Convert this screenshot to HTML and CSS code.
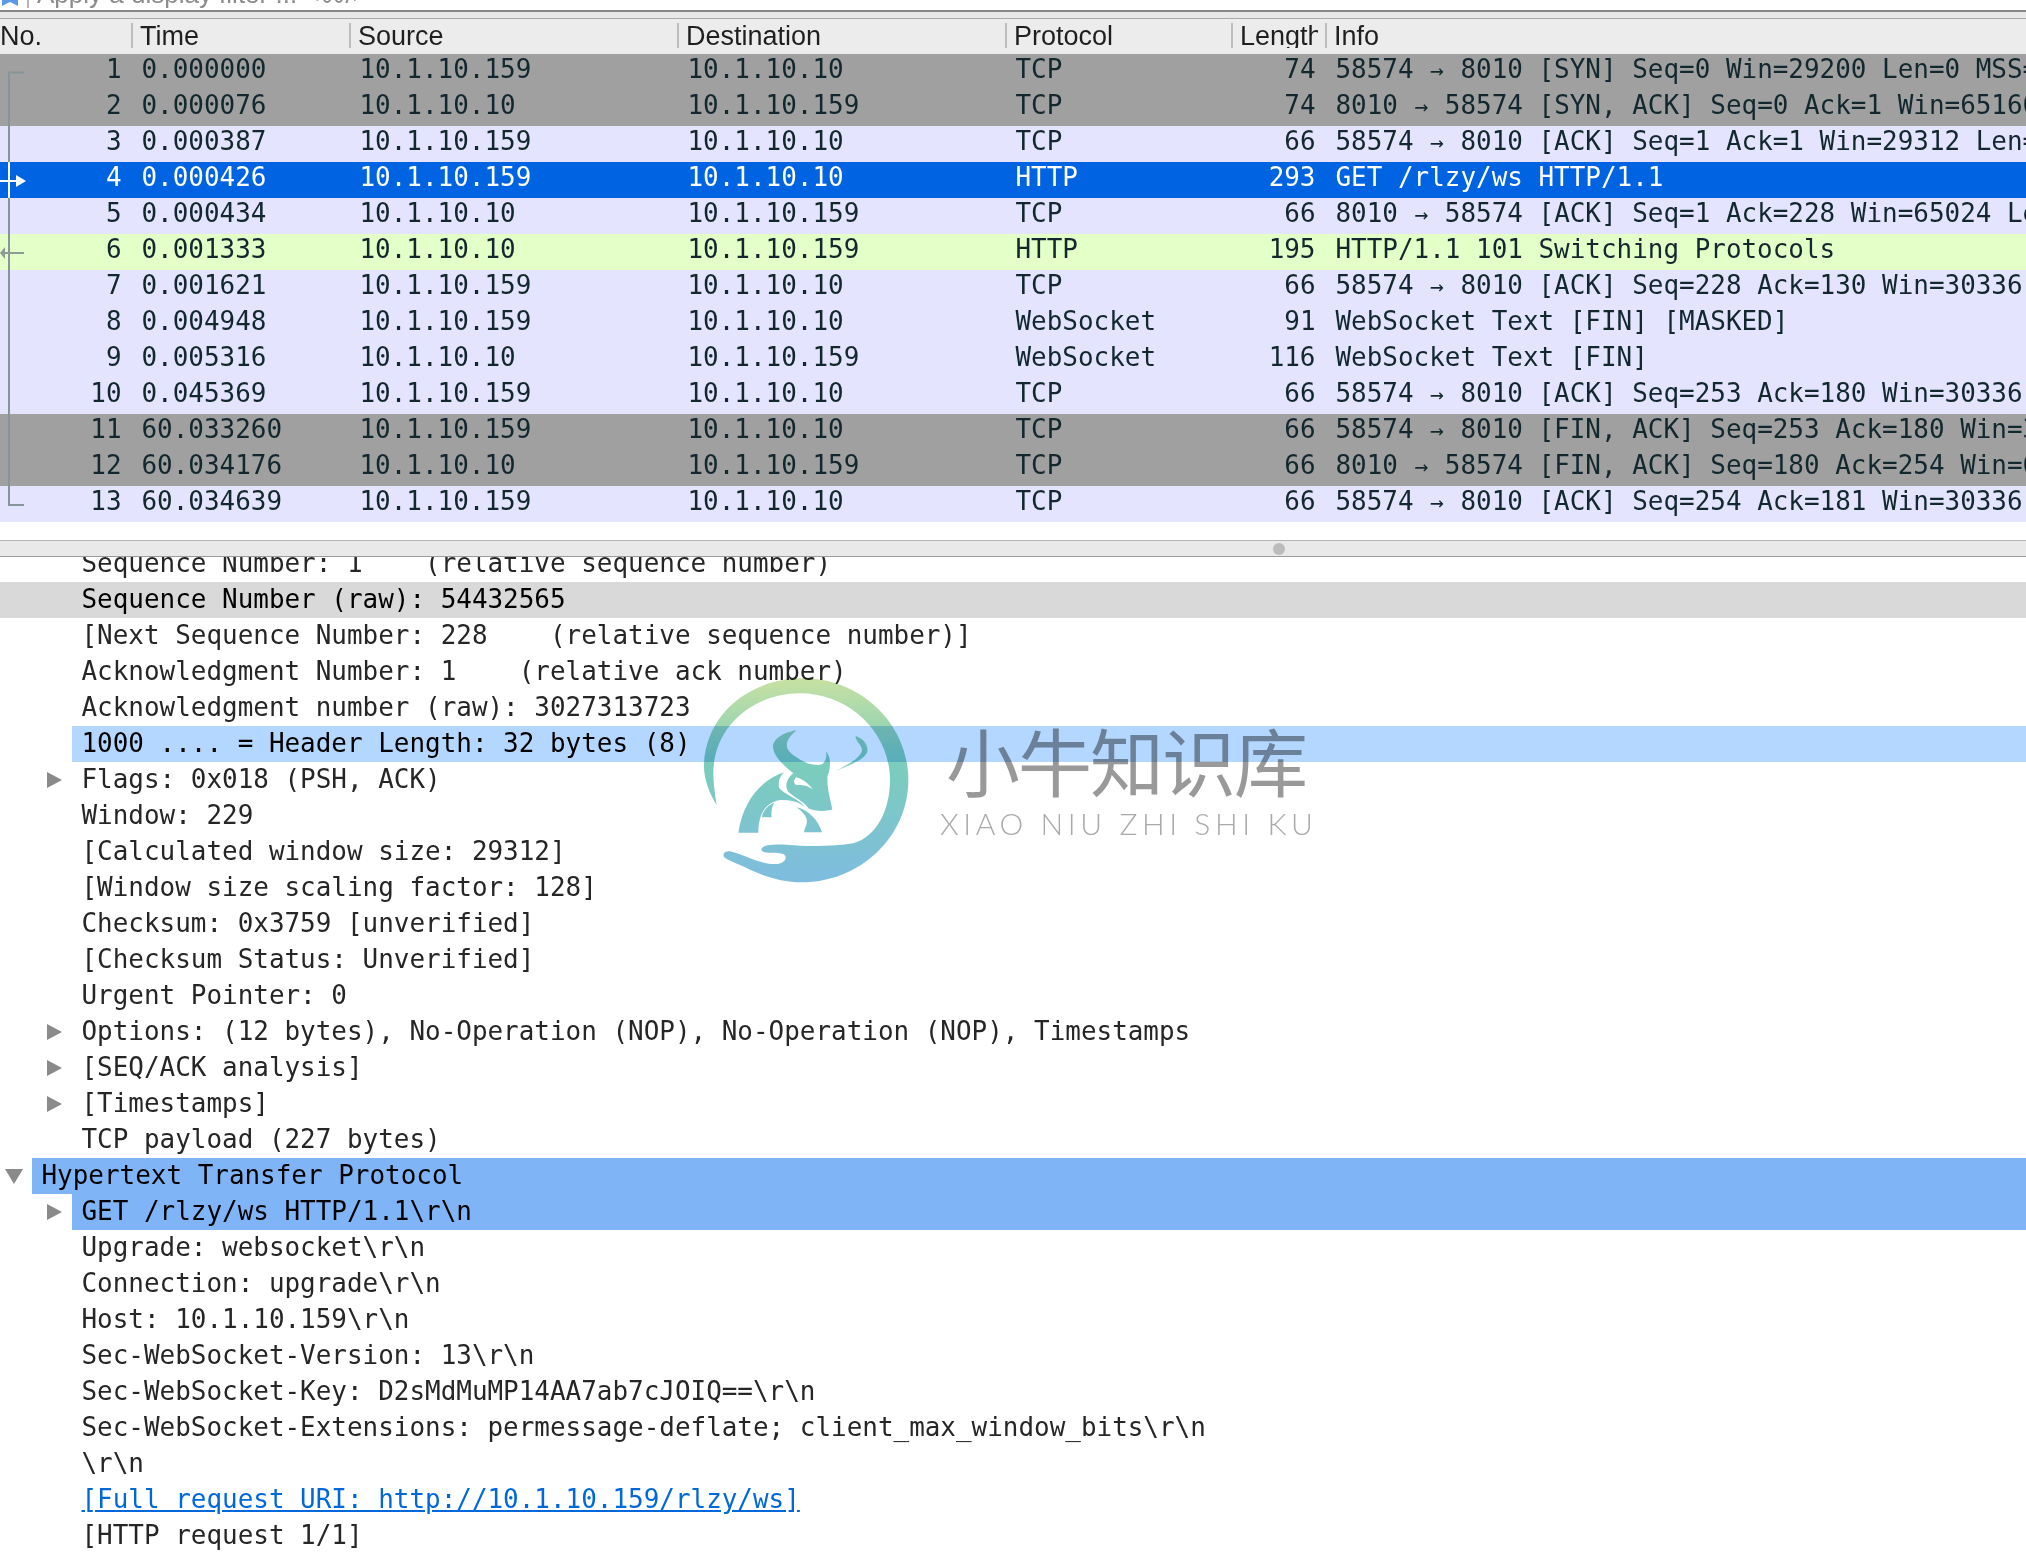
FILE: index.html
```html
<!DOCTYPE html>
<html lang="en">
<head>
<meta charset="utf-8">
<title>Wireshark capture</title>
<link rel="stylesheet" href="styles.css">
</head>
<body>
<div class="app">
  <div class="filter-bar">
    <svg class="bookmark" width="20" height="6" viewBox="0 0 20 6"><polygon points="2,0 18,0 18,6 10,2 2,6" fill="#5b9be6"/></svg>
    <span class="filter-sep"></span>
    <span class="filter-text">Apply a display filter ... &lt;⌘/&gt;</span>
  </div>
  <div class="strip"></div>
  <div class="packet-head cols">
    <div class="hcell first"><span>No.</span></div>
    <div class="hcell"><span>Time</span></div>
    <div class="hcell"><span>Source</span></div>
    <div class="hcell"><span>Destination</span></div>
    <div class="hcell"><span>Protocol</span></div>
    <div class="hcell len"><span>Length</span></div>
    <div class="hcell"><span>Info</span></div>
  </div>
  <div class="packets">
    <div class="pkt cols gray"><span class="no">1</span><span>0.000000</span><span>10.1.10.159</span><span>10.1.10.10</span><span>TCP</span><span class="num">74</span><span>58574 <i>→</i> 8010 [SYN] Seq=0 Win=29200 Len=0 MSS=1460</span></div>
    <div class="pkt cols gray"><span class="no">2</span><span>0.000076</span><span>10.1.10.10</span><span>10.1.10.159</span><span>TCP</span><span class="num">74</span><span>8010 <i>→</i> 58574 [SYN, ACK] Seq=0 Ack=1 Win=65160 Len=0</span></div>
    <div class="pkt cols tcp"><span class="no">3</span><span>0.000387</span><span>10.1.10.159</span><span>10.1.10.10</span><span>TCP</span><span class="num">66</span><span>58574 <i>→</i> 8010 [ACK] Seq=1 Ack=1 Win=29312 Len=0</span></div>
    <div class="pkt cols sel"><span class="no">4</span><span>0.000426</span><span>10.1.10.159</span><span>10.1.10.10</span><span>HTTP</span><span class="num">293</span><span>GET /rlzy/ws HTTP/1.1</span></div>
    <div class="pkt cols tcp"><span class="no">5</span><span>0.000434</span><span>10.1.10.10</span><span>10.1.10.159</span><span>TCP</span><span class="num">66</span><span>8010 <i>→</i> 58574 [ACK] Seq=1 Ack=228 Win=65024 Len=0</span></div>
    <div class="pkt cols http"><span class="no">6</span><span>0.001333</span><span>10.1.10.10</span><span>10.1.10.159</span><span>HTTP</span><span class="num">195</span><span>HTTP/1.1 101 Switching Protocols</span></div>
    <div class="pkt cols tcp"><span class="no">7</span><span>0.001621</span><span>10.1.10.159</span><span>10.1.10.10</span><span>TCP</span><span class="num">66</span><span>58574 <i>→</i> 8010 [ACK] Seq=228 Ack=130 Win=30336 Len=0</span></div>
    <div class="pkt cols tcp"><span class="no">8</span><span>0.004948</span><span>10.1.10.159</span><span>10.1.10.10</span><span>WebSocket</span><span class="num">91</span><span>WebSocket Text [FIN] [MASKED]</span></div>
    <div class="pkt cols tcp"><span class="no">9</span><span>0.005316</span><span>10.1.10.10</span><span>10.1.10.159</span><span>WebSocket</span><span class="num">116</span><span>WebSocket Text [FIN]</span></div>
    <div class="pkt cols tcp"><span class="no">10</span><span>0.045369</span><span>10.1.10.159</span><span>10.1.10.10</span><span>TCP</span><span class="num">66</span><span>58574 <i>→</i> 8010 [ACK] Seq=253 Ack=180 Win=30336 Len=0</span></div>
    <div class="pkt cols gray"><span class="no">11</span><span>60.033260</span><span>10.1.10.159</span><span>10.1.10.10</span><span>TCP</span><span class="num">66</span><span>58574 <i>→</i> 8010 [FIN, ACK] Seq=253 Ack=180 Win=30336 Len=0</span></div>
    <div class="pkt cols gray"><span class="no">12</span><span>60.034176</span><span>10.1.10.10</span><span>10.1.10.159</span><span>TCP</span><span class="num">66</span><span>8010 <i>→</i> 58574 [FIN, ACK] Seq=180 Ack=254 Win=65024 Len=0</span></div>
    <div class="pkt cols tcp"><span class="no">13</span><span>60.034639</span><span>10.1.10.159</span><span>10.1.10.10</span><span>TCP</span><span class="num">66</span><span>58574 <i>→</i> 8010 [ACK] Seq=254 Ack=181 Win=30336 Len=0</span></div>
    <svg class="rel-lines" width="30" height="468" viewBox="0 0 30 468">
      <path d="M24 18.5H9V451H24" fill="none" stroke="#87959a" stroke-width="2"/>
      <path d="M9 108V144M0 127H16" fill="none" stroke="#fff" stroke-width="2"/>
      <polygon points="16,121 26,127 16,133" fill="#fff"/>
      <path d="M4 199H24" fill="none" stroke="#8e9a94" stroke-width="2"/>
      <polygon points="5,193 0,199 5,205" fill="#8e9a94"/>
    </svg>
  </div>
  <div class="splitter"><span class="handle"></span></div>
  <div class="details">
    <div class="tree clipped">
      <div class="node"><span class="twisty"></span><span class="label">Sequence Number: 1    (relative sequence number)</span></div>
      <div class="node raw"><span class="twisty"></span><span class="label">Sequence Number (raw): 54432565</span></div>
      <div class="node"><span class="twisty"></span><span class="label">[Next Sequence Number: 228    (relative sequence number)]</span></div>
      <div class="node"><span class="twisty"></span><span class="label">Acknowledgment Number: 1    (relative ack number)</span></div>
      <div class="node"><span class="twisty"></span><span class="label">Acknowledgment number (raw): 3027313723</span></div>
      <div class="node field"><span class="twisty"></span><span class="label">1000 .... = Header Length: 32 bytes (8)</span></div>
      <div class="node"><span class="twisty"><b class="closed"></b></span><span class="label">Flags: 0x018 (PSH, ACK)</span></div>
      <div class="node"><span class="twisty"></span><span class="label">Window: 229</span></div>
      <div class="node"><span class="twisty"></span><span class="label">[Calculated window size: 29312]</span></div>
      <div class="node"><span class="twisty"></span><span class="label">[Window size scaling factor: 128]</span></div>
      <div class="node"><span class="twisty"></span><span class="label">Checksum: 0x3759 [unverified]</span></div>
      <div class="node"><span class="twisty"></span><span class="label">[Checksum Status: Unverified]</span></div>
      <div class="node"><span class="twisty"></span><span class="label">Urgent Pointer: 0</span></div>
      <div class="node"><span class="twisty"><b class="closed"></b></span><span class="label">Options: (12 bytes), No-Operation (NOP), No-Operation (NOP), Timestamps</span></div>
      <div class="node"><span class="twisty"><b class="closed"></b></span><span class="label">[SEQ/ACK analysis]</span></div>
      <div class="node"><span class="twisty"><b class="closed"></b></span><span class="label">[Timestamps]</span></div>
      <div class="node"><span class="twisty"></span><span class="label">TCP payload (227 bytes)</span></div>
      <div class="node top proto"><span class="twisty"><b class="open"></b></span><span class="label">Hypertext Transfer Protocol</span></div>
      <div class="node proto"><span class="twisty"><b class="closed"></b></span><span class="label">GET /rlzy/ws HTTP/1.1\r\n</span></div>
      <div class="node"><span class="twisty"></span><span class="label">Upgrade: websocket\r\n</span></div>
      <div class="node"><span class="twisty"></span><span class="label">Connection: upgrade\r\n</span></div>
      <div class="node"><span class="twisty"></span><span class="label">Host: 10.1.10.159\r\n</span></div>
      <div class="node"><span class="twisty"></span><span class="label">Sec-WebSocket-Version: 13\r\n</span></div>
      <div class="node"><span class="twisty"></span><span class="label">Sec-WebSocket-Key: D2sMdMuMP14AA7ab7cJOIQ==\r\n</span></div>
      <div class="node"><span class="twisty"></span><span class="label">Sec-WebSocket-Extensions: permessage-deflate; client_max_window_bits\r\n</span></div>
      <div class="node"><span class="twisty"></span><span class="label">\r\n</span></div>
      <div class="node"><span class="twisty"></span><span class="label link">[Full request URI: http://10.1.10.159/rlzy/ws]</span></div>
      <div class="node"><span class="twisty"></span><span class="label">[HTTP request 1/1]</span></div>
    </div>
  </div>
  <div class="watermark">
    <svg class="wm-logo" width="240" height="220" viewBox="0 0 720 660">
      <defs>
        <linearGradient id="wmGrad" gradientUnits="userSpaceOnUse" x1="0" y1="25" x2="0" y2="637">
          <stop offset="0" stop-color="#c8e1a2"/>
          <stop offset="0.42" stop-color="#7bcdbb"/>
          <stop offset="1" stop-color="#7fbcdf"/>
        </linearGradient>
      </defs>
      <g fill="url(#wmGrad)">
        <path d="M80 405C55 365 40 320 42 280C50 130 180 25 340 25C510 25 655 160 655 330C655 500 510 637 335 637C270 637 215 617 165 592C140 580 115 572 103 562C95 550 108 540 125 545C165 555 215 585 262 582C285 578 295 562 280 552C260 545 225 553 214 541C215 525 240 522 290 524C350 530 430 530 490 520C560 500 600 420 600 330C600 190 480 70 330 70C190 70 70 170 70 310C70 340 75 375 80 405Z"/>
        <path d="M320 181C285 186 248 205 249 232C252 262 285 290 310 310C290 325 283 350 295 365C315 385 345 395 355 415C375 425 410 425 427 418C425 400 412 370 412 320C422 295 425 265 408 243C412 265 405 285 385 285C365 285 345 280 320 262C290 245 272 220 320 181ZM318 322C335 325 355 340 368 358C350 345 335 345 322 345C310 345 310 330 318 322Z" fill-rule="evenodd"/>
        <path d="M497 198C520 205 535 225 532 245C520 275 470 285 437 305C465 285 505 270 515 245C520 225 495 215 497 198Z"/>
        <path d="M282 307C215 330 160 390 145 488L205 488C205 450 215 400 270 390C295 388 330 395 345 412C325 385 285 375 268 355C262 335 270 320 282 307Z"/>
        <path d="M253 398C232 405 218 425 215 442L245 442C243 425 245 410 253 398Z"/>
        <path d="M320 412C355 420 385 450 396 487L342 487C345 465 370 450 320 412Z"/>
      </g>
    </svg>
    <div class="wm-text">
      <div class="wm-cn">小牛知识库</div>
      <div class="wm-en">XIAO NIU ZHI SHI KU</div>
    </div>
  </div>
</div>
</body>
</html>
```

FILE: styles.css
```css
html, body {
  margin: 0;
  padding: 0;
  background: #fff;
}
.app {
  position: relative;
  width: 2026px;
  height: 1556px;
  overflow: hidden;
  font-family: "DejaVu Sans Mono", "Liberation Mono", monospace;
  font-size: 25.94px;
  color: #262626;
}

/* clipped filter bar */
.filter-bar {
  display: flex;
  height: 10px;
  overflow: hidden;
  background: #fff;
}
.bookmark {
  flex: none;
}
.filter-sep {
  flex: none;
  width: 2px;
  height: 8px;
  margin-left: 7px;
  background: #b5b5b5;
}
.filter-text {
  margin: -24px 0 0 8px;
  line-height: 36px;
  height: 36px;
  font-family: "Liberation Sans", Arial, sans-serif;
  font-size: 26px;
  color: #8c8c8c;
  white-space: pre;
}
.strip {
  height: 6px;
  border-top: 2px solid #888;
  border-bottom: 1px solid #aaa;
  background: #e8e8e8;
}

/* packet list */
.cols {
  display: grid;
  grid-template-columns: 131px 218px 328px 328px 226px 94px 1fr;
}
.packet-head {
  height: 35px;
  padding-top: 4px;
  box-sizing: border-box;
  background: #ececec;
  font-family: "Liberation Sans", Arial, sans-serif;
  font-size: 27px;
  color: #1f1f1f;
  line-height: 27px;
}
.hcell {
  height: 25px;
  padding-left: 7px;
  border-left: 2px solid #bdbdbd;
  box-sizing: border-box;
  white-space: nowrap;
  overflow: hidden;
}
.hcell.first {
  padding-left: 0;
  border-left: 0;
}
.hcell.len {
  padding-right: 7px;
}
.hcell span {
  display: block;
  overflow: hidden;
}
.packets {
  position: relative;
  height: 486px;
}
.pkt {
  height: 36px;
  line-height: 31px;
  overflow: hidden;
  white-space: pre;
  color: #12272e;
}
.pkt > span {
  padding-left: 10.5px;
  overflow: hidden;
}
.pkt > .no,
.pkt > .num {
  padding: 0 9.5px 0 0;
  text-align: right;
}
.pkt i {
  display: inline-block;
  width: 15.62px;
  font-style: normal;
  font-size: 23px;
  line-height: 20px;
  text-align: center;
}
.gray { background: #a0a0a0; }
.tcp { background: #e4e4ff; }
.http { background: #e4ffc7; }
.sel { background: #0063e1; color: #fff; }
.rel-lines {
  position: absolute;
  left: 0;
  top: 0;
}

/* splitter */
.splitter {
  display: flex;
  align-items: center;
  justify-content: center;
  height: 17px;
  box-sizing: border-box;
  padding-left: 532px;
  border-top: 1px solid #b4b4b4;
  border-bottom: 1px solid #9c9c9c;
  background: #e9e9e9;
}
.handle {
  width: 12px;
  height: 12px;
  border-radius: 50%;
  background: #bcbcbc;
}

/* details tree */
.details {
  height: 999px;
  overflow: hidden;
}
.tree.clipped {
  margin-top: -11px;
}
.node {
  display: flex;
  height: 36px;
  line-height: 34px;
  white-space: pre;
}
.twisty {
  flex: none;
  position: relative;
  width: 72px;
}
.label {
  flex: 1;
  padding-left: 9.5px;
}
.node.top .twisty {
  width: 32px;
}
.raw {
  background: #d9d9d9;
  color: #000;
}
.field .label {
  background: #b3d7ff;
  color: #000;
}
.proto .label {
  background: #7fb5f6;
  color: #000;
}
.link {
  color: #0068da;
  text-decoration: underline;
}
.closed,
.open {
  position: absolute;
  width: 0;
  height: 0;
  border-style: solid;
  border-color: transparent;
}
.closed {
  left: 47px;
  top: 10px;
  border-width: 8.5px 0 8.5px 15px;
  border-left-color: #8a8a8a;
}
.open {
  left: 5px;
  top: 11px;
  border-width: 15px 9px 0 9px;
  border-top-color: #8a8a8a;
}

/* watermark overlay */
.watermark {
  position: absolute;
  left: 690px;
  top: 670px;
  width: 640px;
  height: 220px;
  mix-blend-mode: multiply;
}
.wm-logo {
  position: absolute;
  left: 0;
  top: 0;
}
.wm-text {
  position: absolute;
  left: 250px;
  top: 44px;
  color: #999;
}
.wm-cn {
  margin-left: 6px;
  font-family: "Noto Sans CJK SC", sans-serif;
  font-size: 74px;
  line-height: 90px;
  letter-spacing: -2px;
  white-space: nowrap;
}
.wm-en {
  margin-top: 4px;
  font-family: Lato, "Liberation Sans", sans-serif;
  font-weight: 300;
  font-size: 30px;
  line-height: 30px;
  letter-spacing: 4.6px;
  color: #aaa;
  white-space: nowrap;
}
```
